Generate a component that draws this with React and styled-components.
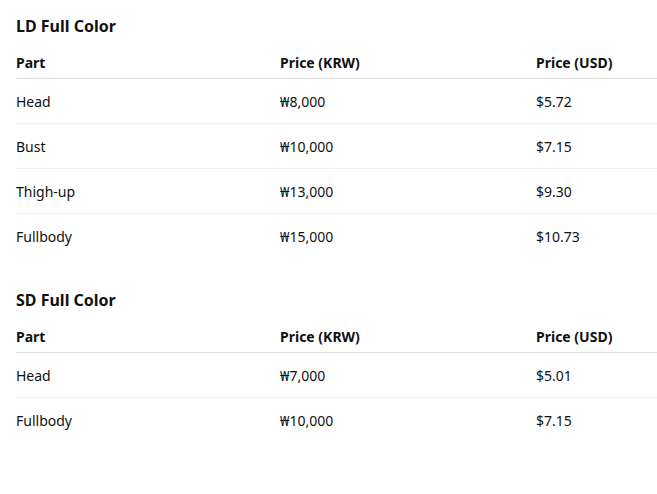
import React from "react";
import styled, { createGlobalStyle } from "styled-components";

const Global = createGlobalStyle`
  html, body { margin: 0; padding: 0; background: #fff; }
  body { font-family: "Noto Sans", "Noto Sans CJK KR", sans-serif; color: #111; }
`;

const Page = styled.div`
  padding: 14px 0 0 16px;
`;

const Section = styled.section`
  margin-bottom: 29px;
`;

const Title = styled.h2`
  margin: 0 0 14px;
  font-size: 16px;
  line-height: 24px;
  font-weight: 700;
`;

const Table = styled.table`
  width: 100%;
  border-collapse: collapse;
  table-layout: fixed;
  font-size: 14px;
`;

const Th = styled.th`
  text-align: left;
  font-weight: 700;
  line-height: 21px;
  padding: 0 0 5px;
  border-bottom: 1px solid #dcdcdc;
`;

const Td = styled.td`
  line-height: 21px;
  padding: 12px 0 11px;
`;

const Row = styled.tr`
  border-bottom: 1px solid ${(p) => (p.$last ? "transparent" : "#f0f0f0")};
`;

const data = [
  {
    title: "LD Full Color",
    rows: [
      ["Head", "₩8,000", "$5.72"],
      ["Bust", "₩10,000", "$7.15"],
      ["Thigh-up", "₩13,000", "$9.30"],
      ["Fullbody", "₩15,000", "$10.73"],
    ],
  },
  {
    title: "SD Full Color",
    rows: [
      ["Head", "₩7,000", "$5.01"],
      ["Fullbody", "₩10,000", "$7.15"],
    ],
  },
];

export default function App() {
  return (
    <Page>
      <Global />
      {data.map((s) => (
        <Section key={s.title}>
          <Title>{s.title}</Title>
          <Table>
            <colgroup>
              <col style={{ width: 264 }} />
              <col style={{ width: 256 }} />
              <col />
            </colgroup>
            <thead>
              <tr>
                <Th>Part</Th>
                <Th>Price (KRW)</Th>
                <Th>Price (USD)</Th>
              </tr>
            </thead>
            <tbody>
              {s.rows.map((r, i) => (
                <Row key={r[0]} $last={i === s.rows.length - 1}>
                  {r.map((c, j) => (
                    <Td key={j}>{c}</Td>
                  ))}
                </Row>
              ))}
            </tbody>
          </Table>
        </Section>
      ))}
    </Page>
  );
}
